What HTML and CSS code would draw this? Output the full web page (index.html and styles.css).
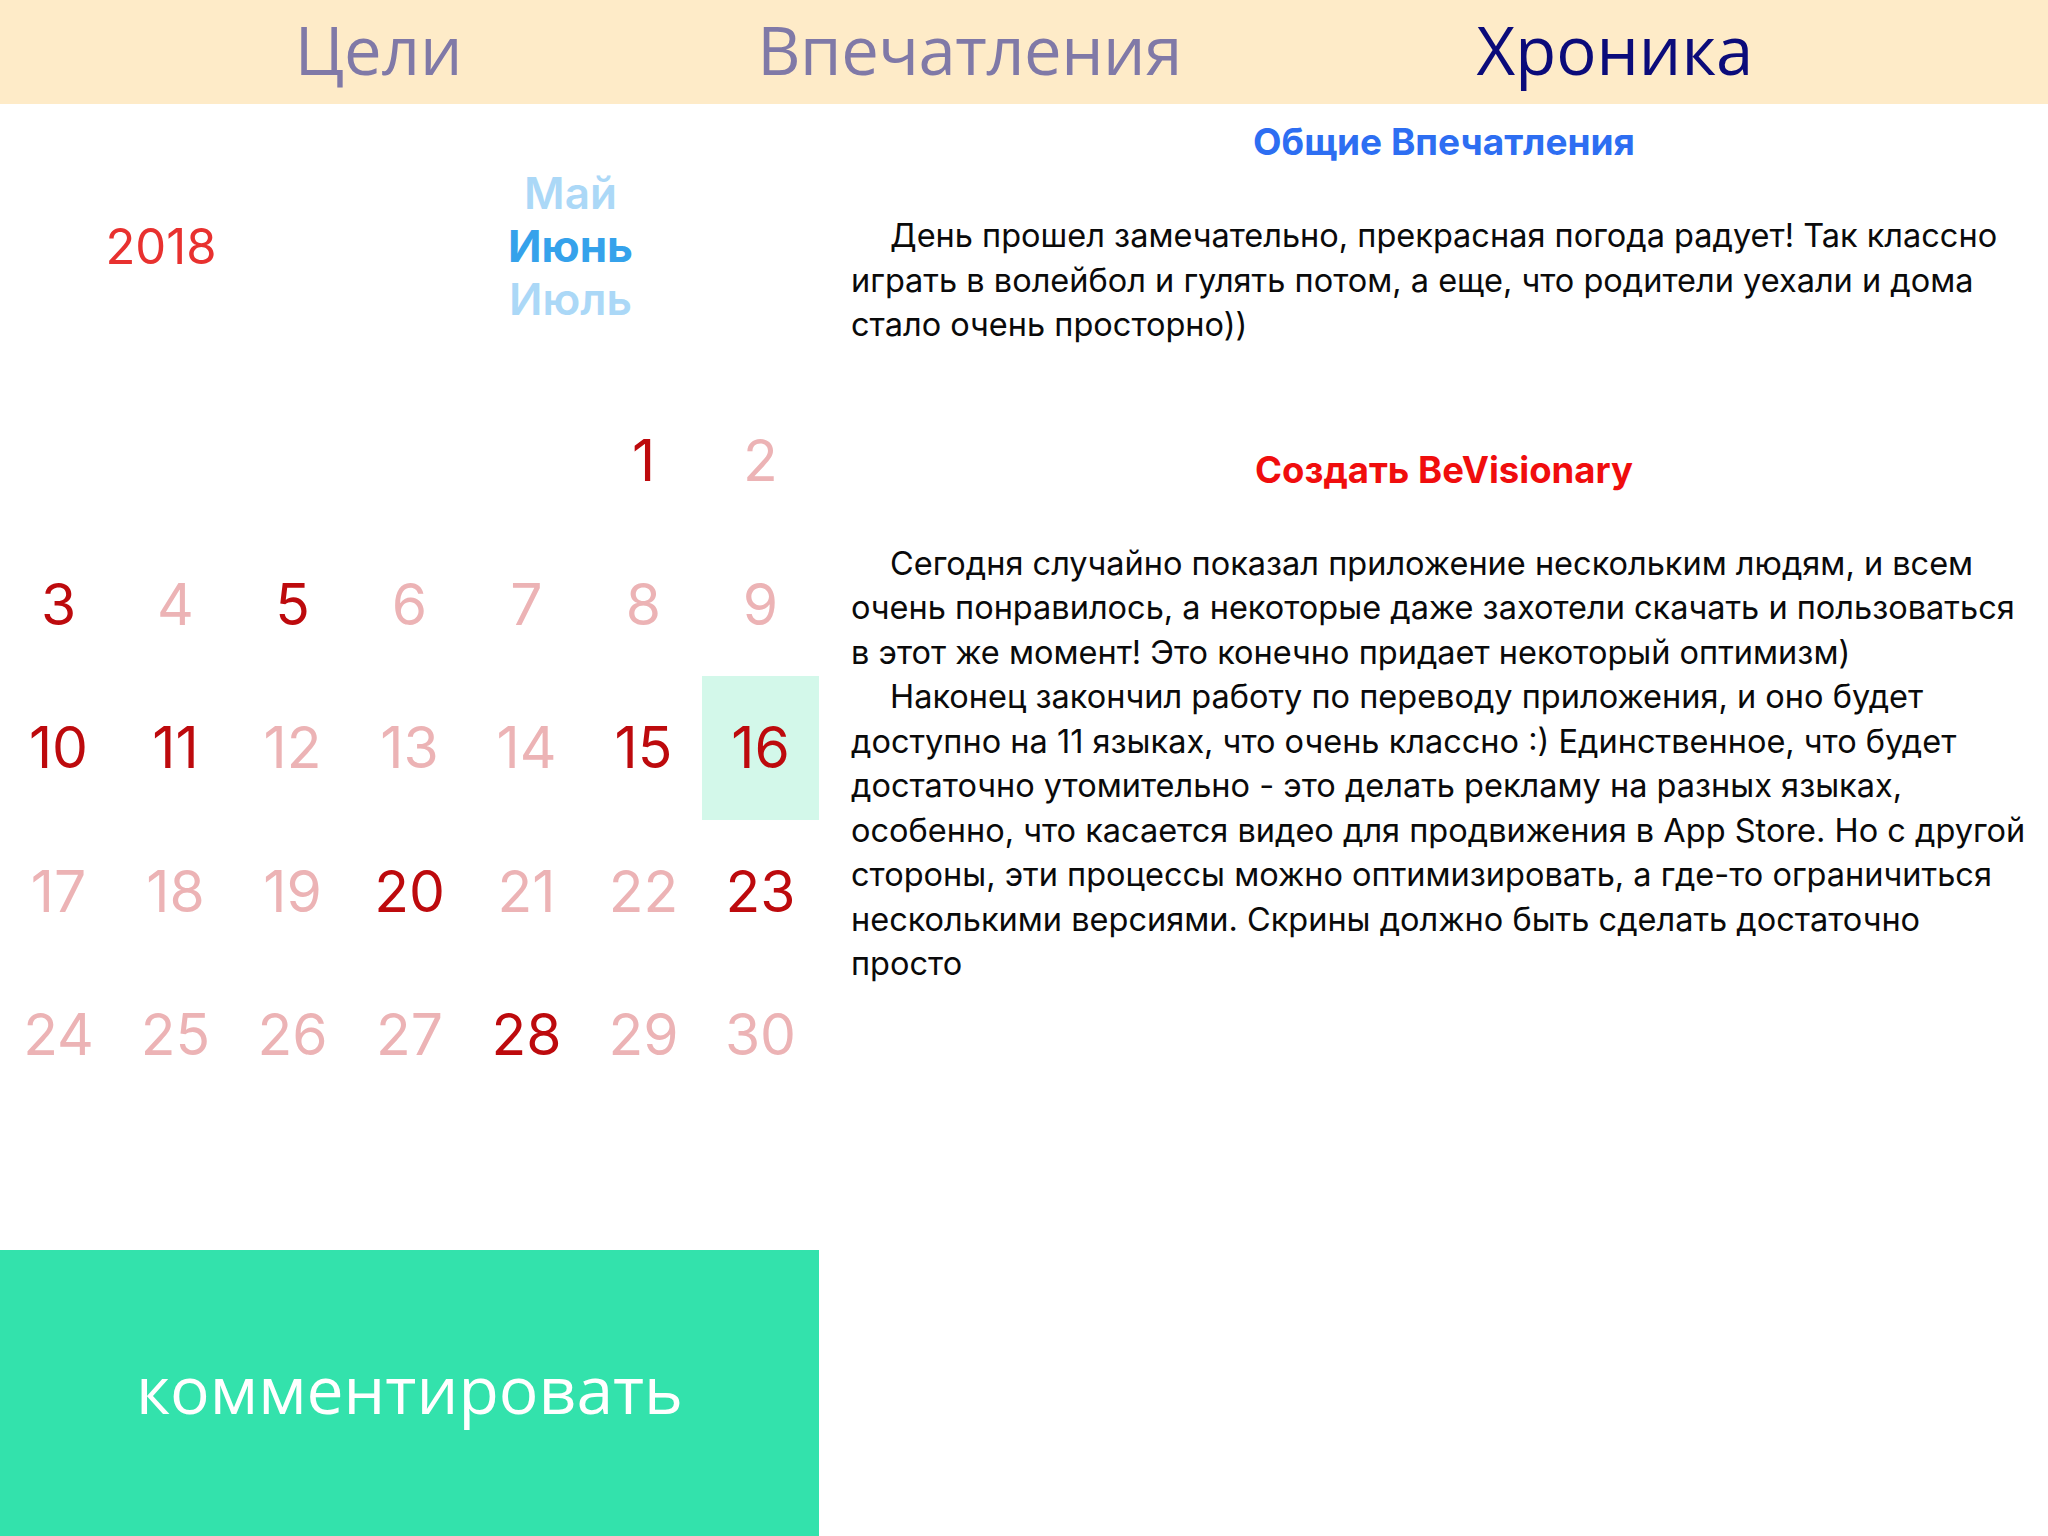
FILE: index.html
```html
<!DOCTYPE html>
<html lang="ru">
<head>
<meta charset="utf-8">
<title>Хроника</title>
<link rel="stylesheet" href="styles.css">
</head>
<body>
<header class="tabs">
  <span class="tab">Цели</span>
  <span class="tab">Впечатления</span>
  <span class="tab active">Хроника</span>
</header>
<main class="content">
  <section class="left">
    <div class="picker">
      <div class="year">2018</div>
      <div class="months">
        <div class="month dim">Май</div>
        <div class="month current">Июнь</div>
        <div class="month dim">Июль</div>
      </div>
    </div>
    <div class="grid">
      <span class="day empty"></span><span class="day empty"></span><span class="day empty"></span><span class="day empty"></span><span class="day empty"></span>
      <span class="day on">1</span><span class="day">2</span>
      <span class="day on">3</span><span class="day">4</span><span class="day on">5</span><span class="day">6</span><span class="day">7</span><span class="day">8</span><span class="day">9</span>
      <span class="day on">10</span><span class="day on">11</span><span class="day">12</span><span class="day">13</span><span class="day">14</span><span class="day on">15</span><span class="day on selected">16</span>
      <span class="day">17</span><span class="day">18</span><span class="day">19</span><span class="day on">20</span><span class="day">21</span><span class="day">22</span><span class="day on">23</span>
      <span class="day">24</span><span class="day">25</span><span class="day">26</span><span class="day">27</span><span class="day on">28</span><span class="day">29</span><span class="day">30</span>
    </div>
    <button class="comment">комментировать</button>
  </section>
  <section class="right">
    <h2 class="title blue">Общие Впечатления</h2>
    <div class="text">
      <p>День прошел замечательно, прекрасная погода радует! Так классно<br>играть в волейбол и гулять потом, а еще, что родители уехали и дома<br>стало очень просторно))</p>
    </div>
    <h2 class="title red second">Создать BeVisionary</h2>
    <div class="text">
      <p>Сегодня случайно показал приложение нескольким людям, и всем<br>очень понравилось, а некоторые даже захотели скачать и пользоваться<br>в этот же момент! Это конечно придает некоторый оптимизм)</p>
      <p>Наконец закончил работу по переводу приложения, и оно будет<br>доступно на 11 языках, что очень классно :) Единственное, что будет<br>достаточно утомительно - это делать рекламу на разных языках,<br>особенно, что касается видео для продвижения в App Store. Но с другой<br>стороны, эти процессы можно оптимизировать, а где-то ограничиться<br>несколькими версиями. Скрины должно быть сделать достаточно<br>просто</p>
    </div>
  </section>
</main>
</body>
</html>
```

FILE: styles.css
```css
* { box-sizing: border-box; }
html, body {
  margin: 0;
  padding: 0;
  background: #ffffff;
}
body {
  width: 2048px;
  height: 1536px;
  overflow: hidden;
  font-family: "Inter", "Liberation Sans", sans-serif;
}

.tabs {
  height: 104px;
  padding-bottom: 6px;
  background: #feebc8;
  display: flex;
  justify-content: space-evenly;
  align-items: center;
  font-family: "Open Sans", "Noto Sans", sans-serif;
  font-size: 67px;
  line-height: 96px;
}
.tab { color: #8079a7; }
.tab:nth-child(2) { letter-spacing: -0.5px; }
.tab.active { color: #0b0b7a; }

.content {
  display: grid;
  grid-template-columns: 819px 1fr;
  height: 1432px;
}

.left {
  display: flex;
  flex-direction: column;
}
.picker {
  height: 285px;
  display: grid;
  grid-template-columns: 322px 1fr;
  align-items: center;
  text-align: center;
}
.year {
  color: #e8312f;
  font-size: 49px;
}
.months {
  display: flex;
  flex-direction: column;
  align-items: center;
}
.month {
  font-size: 44px;
  line-height: 53px;
}
.month.dim { color: #abd8f7; font-weight: 600; }
.month.current { color: #35a2eb; font-weight: 700; }

.grid {
  display: grid;
  grid-template-columns: repeat(7, 1fr);
  grid-auto-rows: 143.5px;
  height: 861px;
}
.day {
  display: flex;
  align-items: center;
  justify-content: center;
  font-size: 57px;
  color: #ecb3b5;
}
.day.on { color: #bd0a0d; }
.day.selected { background: #d3f8ea; }

.comment {
  height: 286px;
  border: none;
  margin: 0;
  padding: 0;
  background: #33e2ac;
  color: #ffffff;
  font-family: "Open Sans", "Noto Sans", sans-serif;
  font-size: 66px;
  padding-bottom: 10px;
}

.right {
  padding: 16px 11px 0 32px;
}
.title {
  margin: 0 0 50px;
  text-align: center;
  font-size: 37px;
  line-height: 44px;
  font-weight: 700;
}
.title.blue { color: #2d6ef2; }
.title.red { color: #f00d0d; font-size: 36.5px; }
.title.second { margin-top: 100px; }

.text p {
  margin: 0;
  font-size: 32.5px;
  line-height: 44.5px;
  color: #0a0a0a;
  text-indent: 39px;
  white-space: nowrap;
}
```
